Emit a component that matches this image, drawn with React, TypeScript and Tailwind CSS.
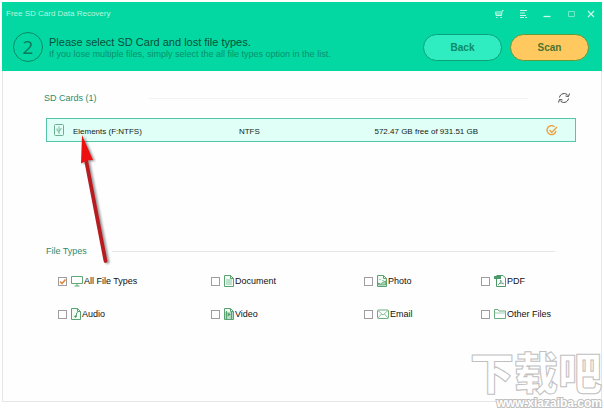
import { useState, type ReactNode } from 'react';

function DocShape({ children }: { children?: ReactNode }) {
  return (
    <svg className="h-3 w-[10px]" viewBox="0 0 10 12" fill="none" stroke="#5ba273">
      <path d="M.5.5h6l3 3v8h-9z" fill="#f1fbf4" />
      <path d="M6.5.5v3h3" />
      {children}
    </svg>
  );
}

const fileTypes = [
  {
    name: 'All File Types',
    icon: (
      <svg className="h-3 w-3" viewBox="0 0 12 12" fill="none" stroke="#5fa878">
        <path d="M.5 1.500h11v7H.5zM6 8.500v2.500M3.500 11h5" />
      </svg>
    ),
  },
  {
    name: 'Document',
    icon: (
      <DocShape>
        <path d="M2 4h6v6H2z" fill="#c4e5cf" stroke="none" />
        <path d="M2.500 5h5M2.500 7h5M2.500 9h5" stroke="#b4dcc0" />
      </DocShape>
    ),
  },
  {
    name: 'Photo',
    icon: (
      <DocShape>
        <path d="M1.500 10V8l2 1 2-1.500L8.500 6v4z" fill="#a6d3b4" strokeWidth="0.800" />
        <path d="M2.500 4.500h1M5.500 5.500h1" />
      </DocShape>
    ),
  },
  {
    name: 'PDF',
    icon: (
      <svg className="h-3 w-3" viewBox="0 0 12 12" fill="none" stroke="#4c9a68">
        <path d="M2.500 4v7.500h9V3L9 .5H2.500" />
        <path d="M0 1h7v3H0z" fill="#4c9a68" stroke="none" />
        <path d="M6 5c1 1.500 2 3.500 4 4M7 5c0 2-1.500 4-3 5M5 8.500c1.500-.5 3-.5 4 0" strokeWidth="0.8" />
      </svg>
    ),
  },
  {
    name: 'Audio',
    icon: (
      <DocShape>
        <path d="M5.500 8.500V5l1.500-.5" strokeWidth="0.900" />
        <circle cx="4.500" cy="8.500" r="0.800" fill="#4c9a68" />
      </DocShape>
    ),
  },
  {
    name: 'Video',
    icon: (
      <DocShape>
        <path d="M1 4h8v7H1z" fill="#b9dec5" stroke="none" />
        <path d="M2.500 3v8M7.500 4v7" strokeWidth="1.200" />
        <path d="M4 5l2.500 1.500L4 8z" fill="#4c9a68" strokeWidth="0.5" />
      </DocShape>
    ),
  },
  {
    name: 'Email',
    icon: (
      <svg className="h-3 w-3" viewBox="0 0 12 12" fill="none" stroke="#6aae80">
        <rect x="0.500" y="2" width="11" height="8.500" rx="1" />
        <path d="M1 2.500l5 4.500 5-4.500M1 10l3.500-4M11 10L7.500 6" strokeWidth="0.8" />
      </svg>
    ),
  },
  {
    name: 'Other Files',
    icon: (
      <svg className="h-3 w-3" viewBox="0 0 12 12" fill="none" stroke="#6aae80">
        <path d="M.5 10.500V1.500h3.500L5 3h6.500v7.500z" />
        <path d="M1 5h10.500" stroke="#9fcfae" />
      </svg>
    ),
  },
];

function FileType({ name, icon }: { name: string; icon: ReactNode }) {
  const [checked, setChecked] = useState(name === 'All File Types');

  return (
    <label className="flex h-4 items-center gap-1 text-[9px] text-[#111]">
      <span className="relative flex">
        <input
          type="checkbox"
          checked={checked}
          onChange={() => setChecked(!checked)}
          className="size-[9px] appearance-none border border-[#a09ca0] bg-white"
        />
        {checked && (
          <svg className="pointer-events-none absolute inset-0 size-[9px]" viewBox="0 0 9 9" fill="none" stroke="#e08a3c" strokeWidth="1.600">
            <path d="M2 4.500l2 2L7.500 2.500" />
          </svg>
        )}
      </span>
      <span className="flex items-center gap-px whitespace-nowrap">
        {icon}
        <span className="pt-0.5">{name}</span>
      </span>
    </label>
  );
}

export default function App() {
  return (
    <div className="relative flex min-h-screen flex-col overflow-hidden bg-white p-0.5 pb-[7px] font-['Liberation_Sans',Arial,sans-serif]">
      <div className="flex flex-1 flex-col border border-t-0 border-[#e6e6e6] bg-[#fefefe]">
        <header className="-mx-px bg-[#03d8a2] pb-[9px]">
          <div className="flex h-6 items-center justify-between pr-1.5 pl-1">
            <h1 className="text-[8px] leading-3 text-[#b4f6df]">Free SD Card Data Recovery</h1>
            <div className="flex items-center gap-2.5 text-[#c6fae9]">
              <div className="flex items-center gap-3.5">
                <button aria-label="Buy">
                  <svg className="size-2.5" viewBox="0 0 10 10" fill="none" stroke="currentColor">
                    <path d="M9.500 1.500H8.200L7.500 6.500H2L1.500 3h6M2 5h5.500" />
                    <path d="M2 8.500h1.500M6.500 8.500H8" />
                  </svg>
                </button>
                <button aria-label="Menu">
                  <svg className="size-2.5" viewBox="0 0 10 10" fill="none" stroke="currentColor">
                    <path d="M2 1.500h7M2 4h5M2 6.500h6M2 8.500h4M7 8.500h2" />
                  </svg>
                </button>
                <button aria-label="Minimize">
                  <svg className="size-2.5" viewBox="0 0 10 10" fill="none" stroke="currentColor">
                    <path d="M1.500 7.500h7" strokeWidth="1.300" />
                  </svg>
                </button>
                <button aria-label="Maximize">
                  <svg className="size-2.5" viewBox="0 0 10 10" fill="none" stroke="#6eebc8">
                    <path d="M2.500 2.500h6v5h-6z" />
                  </svg>
                </button>
              </div>
              <button aria-label="Close">
                <svg className="size-2.5" viewBox="0 0 10 10" fill="none" stroke="currentColor" strokeWidth="1.300">
                  <path d="M2 2l6 6M8 2L2 8" />
                </svg>
              </button>
            </div>
          </div>
          <div className="flex items-center justify-between pt-1.5 pr-[13px] pl-[11px]">
            <div className="flex items-center gap-1.5">
              <div className="flex size-[30px] items-center justify-center rounded-full border border-[#0b8a66] font-['Open_Sans',sans-serif] text-[19px] text-[#0b7a5a]">
                2
              </div>
              <div className="pt-0.5">
                <h2 className="text-[11px] leading-3 text-[#06503b]">Please select SD Card and lost file types.</h2>
                <p className="text-[9px] leading-3 text-[#07916a]">
                  If you lose multiple files, simply select the all file types option in the list.
                </p>
              </div>
            </div>
            <div className="flex gap-2">
              <button className="h-[27px] w-[79px] rounded-full border border-[#0ba27a] bg-[#2fedc0] text-[10px] font-bold text-[#0b8a66]">
                Back
              </button>
              <button className="h-[27px] w-[79px] rounded-full border border-[#5f9a3c] bg-[#ffc960] text-[10px] font-bold text-[#4b7430]">
                Scan
              </button>
            </div>
          </div>
        </header>

        <main className="pt-[19px] pr-[25px] pb-4 pl-[41px]">
          <section>
            <div className="flex h-4 items-center pr-1.5">
              <h3 className="w-[105px] pt-0.5 text-[9px] text-[#2f8a6c]">SD Cards (1)</h3>
              <div className="mr-[30px] h-px flex-1 bg-[#f2f2f2]" />
              <button aria-label="Refresh">
                <svg className="size-3" viewBox="0 0 12 12" fill="none" stroke="#4a4a4a">
                  <path d="M1.500 5.500C2 1.500 7.500 0 10 3.500M10.500 6.500C10 10.500 4.500 12 2 8.500" />
                  <path d="M11.500 1.500l-1 3-3-.5M.5 10.500l1-3 3 .5" />
                </svg>
              </button>
            </div>
            <div className="mt-3 ml-0.5">
              <table className="w-full table-fixed border border-[#55c5a8] bg-[#e0fff7] text-left text-[8px] text-[#111d19]">
                <tbody>
                  <tr className="h-[23px]">
                    <td className="w-[5%] pl-[7px]">
                      <svg className="h-3 w-[10px]" viewBox="0 0 10 12" fill="none" stroke="#6cae92">
                        <rect x="0.500" y="0.500" width="9" height="11" rx="1" />
                        <path d="M5 10V2.500M5 8L3 6.500V4.500M5 7l2-1.500V4" strokeWidth="0.9" />
                      </svg>
                    </td>
                    <td className="w-[31%] pt-[3px]">Elements (F:NTFS)</td>
                    <td className="w-[26%] pt-[3px] pl-0.5">NTFS</td>
                    <td className="w-[32%] pt-[3px]">572.47 GB free of 931.51 GB</td>
                    <td className="pt-0.5 pl-0.5">
                      <svg className="size-3" viewBox="0 0 12 12" fill="none" stroke="#eda040" strokeWidth="1.400">
                        <path d="M8.500 1.700A4.500 4.500 0 1 0 10 6" />
                        <path d="M3.500 5l2.200 2.500L11 2" />
                      </svg>
                    </td>
                  </tr>
                </tbody>
              </table>
            </div>
          </section>

          <section className="mt-[101px]">
            <div className="flex h-4 items-center pr-[21px]">
              <h3 className="w-[68px] pt-0.5 pl-0.5 text-[9px] text-[#2f8a6c]">File Types</h3>
              <div className="h-px flex-1 bg-[#e6e6e6]" />
            </div>
            <div className="mt-3.5 ml-3.5 grid grid-cols-[153fr_153fr_117fr_95fr] gap-y-[17px]">
              {fileTypes.map((type) => (
                <FileType key={type.name} name={type.name} icon={type.icon} />
              ))}
            </div>
          </section>
        </main>
      </div>

      {/* pointer to the drive name */}
      <svg
        className="pointer-events-none absolute top-[134px] left-[70px] h-[132px] w-[44px] drop-shadow-[2px_1px_1px_#00000066]"
        viewBox="0 0 44 132"
      >
        <path d="M16 26L35.500 127" stroke="#b91c20" strokeWidth="3.800" strokeLinecap="round" />
        <path d="M12 1L23 26l-6 .5-6 3z" fill="#ee1010" />
      </svg>

      <div className="pointer-events-none absolute right-0.5 bottom-0 text-right whitespace-nowrap text-white">
        <div className="mb-[7px] font-['Noto_Sans_CJK_SC',sans-serif] text-[44px] leading-[38px] font-black [-webkit-text-stroke:1px_#c0c0c0]">
          下载吧
        </div>
        <div className="text-[12px] leading-3 font-bold [-webkit-text-stroke:2px_#c0c0c0] [paint-order:stroke_fill]">
          www.xiazaiba.com
        </div>
      </div>
    </div>
  );
}
